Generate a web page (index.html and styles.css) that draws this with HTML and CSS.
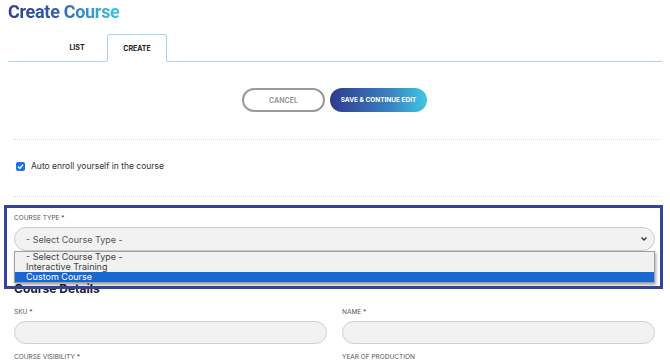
FILE: index.html
```html
<!DOCTYPE html>
<html lang="en">

<head>
    <meta charset="UTF-8">
    <meta name="viewport" content="width=device-width, initial-scale=1.0">
    <title>Create Course</title>
    <link rel="stylesheet" href="styles.css">
</head>

<body>
    <div class="page">
        <h1 class="title">Create Course</h1>

        <div class="tabs">
            <a class="tab">LIST</a>
            <a class="tab active">CREATE</a>
        </div>

        <div class="form">
            <div class="actions">
                <button class="btn btn-cancel">CANCEL</button>
                <button class="btn btn-save">SAVE &amp; CONTINUE EDIT</button>
            </div>

            <div class="divider"></div>

            <label class="check-row">
                <span class="checkbox">
                    <svg width="9" height="9" viewBox="0 0 9 9">
                        <path d="M2 4.6 L3.8 6.4 L7 2.6" fill="none" stroke="#fff" stroke-width="1.4"/>
                    </svg>
                </span>
                Auto enroll yourself in the course
            </label>

            <div class="divider second"></div>

            <div class="field course-type">
                <div class="label">COURSE TYPE *</div>
                <div class="select-wrap">
                    <div class="select">
                        <span>- Select Course Type -</span>
                        <svg width="8" height="6" viewBox="0 0 8 6">
                            <path d="M1.5 1.5 L4 4 L6.5 1.5" fill="none" stroke="#333" stroke-width="1.4"/>
                        </svg>
                    </div>
                    <!-- open native dropdown -->
                    <ul class="listbox">
                        <li>- Select Course Type -</li>
                        <li>Interactive Training</li>
                        <li class="selected">Custom Course</li>
                    </ul>
                </div>
            </div>

            <h3 class="section-title">Course Details</h3>

            <div class="grid">
                <div class="field">
                    <div class="label">SKU *</div>
                    <div class="input"></div>
                </div>
                <div class="field">
                    <div class="label">NAME *</div>
                    <div class="input"></div>
                </div>
                <div class="field">
                    <div class="label">COURSE VISIBILITY *</div>
                    <div class="input"></div>
                </div>
                <div class="field">
                    <div class="label">YEAR OF PRODUCTION</div>
                    <div class="input"></div>
                </div>
            </div>
        </div>

        <div class="highlight"></div>
    </div>
</body>

</html>
```

FILE: styles.css
```css
body {
    margin: 0;
    font-family: Inter, "Open Sans", Arial, sans-serif;
    background-color: #ffffff;
    color: #333;
    overflow: hidden;
}

.page {
    position: relative;
    padding: 0 8px;
}

.title {
    margin: 0;
    font-family: Roboto, Arial, sans-serif;
    font-size: 18px;
    line-height: 24px;
    font-weight: 700;
    letter-spacing: -0.3px;
    display: inline-block;
    background: linear-gradient(90deg, #2d3b8e 0%, #3062a8 45%, #3ec6e2 100%);
    -webkit-background-clip: text;
    background-clip: text;
    color: transparent;
}

.tabs {
    display: flex;
    margin-top: 10px;
    padding-left: 39px;
    border-bottom: 1px solid #a9d5e8;
}

.tab {
    width: 60px;
    height: 26px;
    display: flex;
    align-items: center;
    justify-content: center;
    font-size: 7px;
    font-weight: 700;
    color: #222;
}

.tab.active {
    width: 58px;
    border: 1px solid #a9d5e8;
    border-bottom: 1px solid #fff;
    border-radius: 3px 3px 0 0;
    margin-bottom: -1px;
}

.form {
    padding: 0 7px 0 6px;
}

.actions {
    display: flex;
    justify-content: center;
    gap: 5px;
    margin-top: 26px;
}

.btn {
    height: 24px;
    border-radius: 12px;
    font-family: inherit;
    font-size: 7px;
    font-weight: 700;
    padding: 0;
}

.btn-cancel {
    width: 83px;
    background: #fff;
    border: 2px solid #9a9a9a;
    color: #9a9a9a;
}

.btn-save {
    width: 97px;
    border: none;
    color: #fff;
    font-size: 6.5px;
    background: linear-gradient(90deg, #2e3a8f 0%, #3a7fbf 60%, #3ec8e2 100%);
}

.divider {
    border-top: 1px dotted #dcdcdc;
    margin: 27px -5px 0 0;
}

.divider.second {
    margin-top: 25px;
}

.check-row {
    display: flex;
    align-items: center;
    gap: 6px;
    margin-top: 21px;
    padding-left: 2px;
    font-size: 8.5px;
    color: #333;
}

.checkbox {
    width: 9px;
    height: 9px;
    border-radius: 2px;
    background: #1a73e8;
    display: flex;
}

.field {
    display: flex;
    flex-direction: column;
}

.label {
    font-size: 6.5px;
    color: #555;
    line-height: 8px;
}

.course-type {
    margin-top: 17px;
}

.course-type .label {
    margin-bottom: 5px;
}

.select-wrap {
    position: relative;
}

.select {
    height: 22px;
    border: 1px solid #c9cdd2;
    border-radius: 12px;
    background: #f2f2f2;
    display: flex;
    align-items: center;
    justify-content: space-between;
    padding: 0 6px 0 11px;
    font-size: 9px;
    color: #555;
}

.listbox {
    position: absolute;
    left: 0;
    right: 0;
    top: 100%;
    margin: 0;
    padding: 0;
    list-style: none;
    background: #f1f1f1;
    border: 1px solid #a0a0a0;
    box-shadow: 1px 2px 3px rgba(0, 0, 0, 0.35);
    font-size: 9px;
    color: #444;
}

.listbox li {
    height: 10px;
    line-height: 10px;
    padding-left: 11px;
}

.listbox li.selected {
    background: #1967d2;
    color: #fff;
}

.section-title {
    margin: 31px 0 0;
    font-size: 12px;
    line-height: 14px;
    font-weight: 700;
    color: #222;
}

.grid {
    display: grid;
    grid-template-columns: 1fr 1fr;
    column-gap: 15px;
    row-gap: 9px;
    margin-top: 12px;
}

.grid .label {
    margin-bottom: 5px;
}

.input {
    height: 21px;
    border: 1px solid #cfcfcf;
    border-radius: 12px;
    background: #f2f2f2;
}

.highlight {
    position: absolute;
    left: 4px;
    top: 205px;
    width: 653px;
    height: 78px;
    border: 3px solid #34449c;
}
```
